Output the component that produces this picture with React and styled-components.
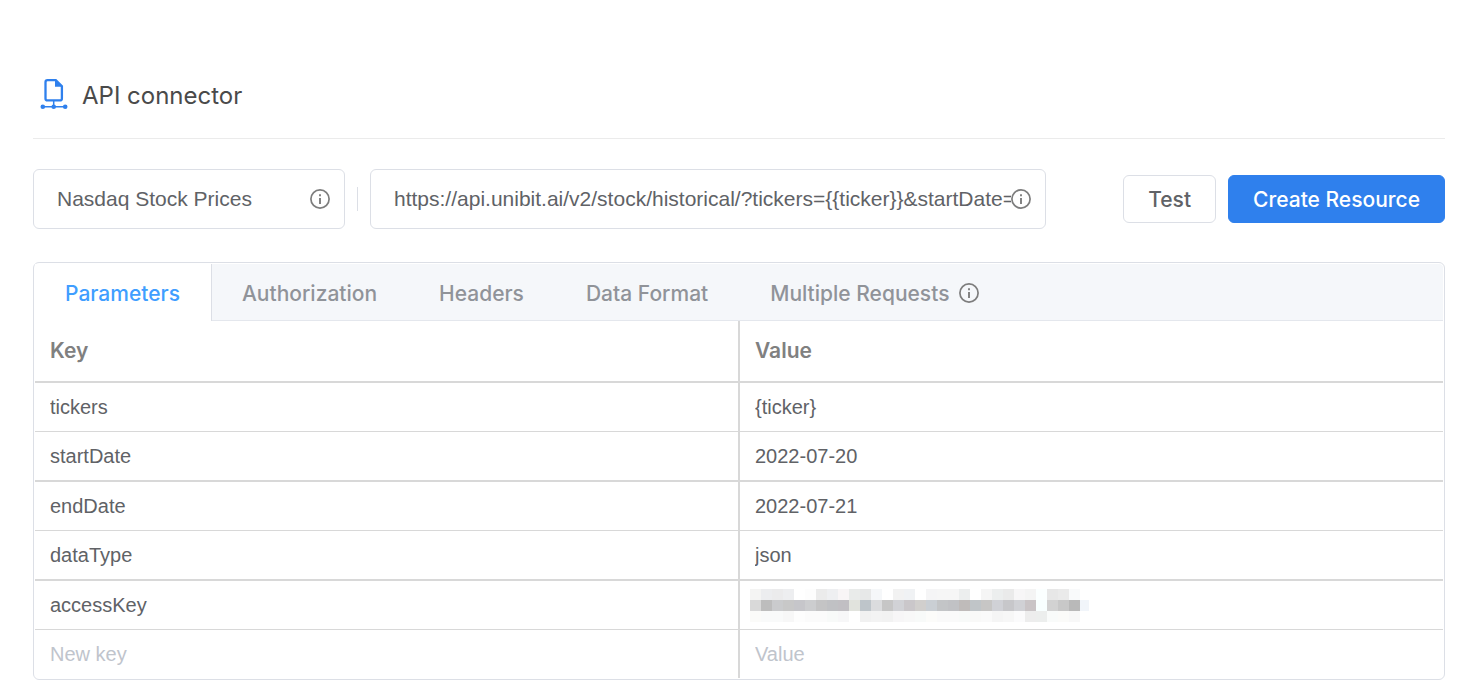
import React, { useState } from 'react';
import styled, { createGlobalStyle, css } from 'styled-components';

const GlobalStyle = createGlobalStyle`
* {
    box-sizing: border-box;
}

body {
    margin: 0;
    background-color: #ffffff;
    font-family: Inter, "Liberation Sans", sans-serif;
    color: #606266;
}
`

//Page
const Page = styled.main`
padding: 54px 34px 12px 33px;
`

//Header
const Header = styled.header`
display: flex;
align-items: center;
gap: 14px;
height: 85px;
padding-left: 7px;
border-bottom: 1px solid #ebebeb;

svg {
    margin-bottom: 4px;
}
`

const Title = styled.h1`
margin: 0;
font-size: 24px;
font-weight: 400;
line-height: 32px;
color: #4a4a4a;
`

//Toolbar
const Toolbar = styled.form`
display: flex;
align-items: center;
margin: 30px 0 33px;
`

const Field = styled.div`
display: flex;
align-items: center;
flex: ${props => props.$grow} 1 0;
max-width: ${props => props.$max};
height: 60px;
padding: 0 14px 0 23px;
border: 1px solid #dcdfe6;
border-radius: 6px;

svg {
    flex-shrink: 0;
}
`

const inputText = css`
min-width: 0;
padding: 0;
border: none;
outline: none;
background: transparent;
font-family: "Liberation Sans", Arial, sans-serif;
color: #606266;
`

const TextInput = styled.input`
${inputText}
flex: 1;
height: 32px;
font-size: 21px;
`

const Separator = styled.span`
width: 1px;
height: 24px;
margin: 0 12px;
background-color: #dcdfe6;
`

//Buttons
const Actions = styled.div`
display: flex;
gap: 12px;
margin-left: auto;
`

const Button = styled.button`
height: 48px;
padding: 0 24px;
border: 1px solid ${props => props.$primary ? '#2f80ed' : '#dcdfe6'};
border-radius: 6px;
background-color: ${props => props.$primary ? '#2f80ed' : '#ffffff'};
font-family: inherit;
font-size: 21px;
font-weight: 500;
color: ${props => props.$primary ? '#ffffff' : '#606266'};
white-space: nowrap;
cursor: pointer;
`

//Tabs
const Card = styled.section`
padding: 1px;
border: 1px solid #dcdfe6;
border-radius: 6px;
`

const TabList = styled.div`
display: flex;
height: 57px;
background-color: #f5f7fa;
border-radius: 4px 4px 0 0;
`

const Tab = styled.button`
display: flex;
align-items: center;
gap: 10px;
padding: 2px ${props => props.$active ? '31px' : '32px'} 0 30px;
border: solid #e4e7ed;
border-width: 0 ${props => props.$active ? '1px 0 0' : '0 1px 0'};
border-right-color: #dcdfe6;
background-color: ${props => props.$active ? '#ffffff' : 'transparent'};
font-family: inherit;
font-size: 21px;
font-weight: 500;
color: ${props => props.$active ? '#409eff' : '#909399'};
white-space: nowrap;
cursor: pointer;
`

const TabFill = styled.span`
flex: 1;
border-bottom: 1px solid #e4e7ed;
`

//Table
const Table = styled.table`
width: 100%;
table-layout: fixed;
border-collapse: separate;
border-spacing: 0;
`

// each side of the divider is half of its 2px
const divider = css`
&:first-child {
    border-right: 1px solid #d8d8d8;
}

&:last-child {
    border-left: 1px solid #d8d8d8;
}
`

const HeadCell = styled.th`
height: 62px;
padding: 0 15px 2px;
border-bottom: 2px solid #d8d8d8;
font-size: 21px;
font-weight: 600;
text-align: left;
color: #808080;
${divider}
`

const Row = styled.tr`
td {
    height: ${props => 48 + props.$line}px;
    border-bottom: ${props => props.$line}px solid #d8d8d8;
}
`

const Cell = styled.td`
padding: 0 15px;
${divider}
`

const CellInput = styled.input`
${inputText}
display: block;
width: 100%;
height: 32px;
font-size: 20px;

&::placeholder {
    color: #c0c4cc;
    opacity: 1;
}
`

const Masked = styled.svg`
display: block;
margin-left: -5px;
`

const InfoIcon = () => (
    <svg width="20" height="20" viewBox="0 0 20 20" fill="none" role="img" aria-label="Info">
        <circle cx="10" cy="10" r="9.1" stroke="#7d7d7d" strokeWidth="1.7" />
        <path d="M10 9v6" stroke="#7d7d7d" strokeWidth="1.9" />
        <path d="M10 5.2v2" stroke="#7d7d7d" strokeWidth="1.9" />
    </svg>
)

const ConnectorIcon = () => (
    <svg width="28" height="32" viewBox="0 0 28 32" fill="none" aria-hidden="true">
        <path d="M7.5 2.2h8.3L21.9 8.3V20.4a2 2 0 0 1-2 2H7.5a2 2 0 0 1-2-2V4.2a2 2 0 0 1 2-2z" stroke="#2f80ed" strokeWidth="2.3" />
        <path d="M15 1.5v7.3h7.8z" fill="#2f80ed" />
        <path d="M13.7 22.5v6M3 28.7h22" stroke="#2f80ed" strokeWidth="1.5" />
        <circle cx="2.8" cy="28.7" r="2.3" fill="#2f80ed" />
        <circle cx="13.7" cy="28.7" r="2.3" fill="#2f80ed" />
        <circle cx="25.2" cy="28.7" r="2.3" fill="#2f80ed" />
    </svg>
)

const tabs = ['Parameters', 'Authorization', 'Headers', 'Data Format', 'Multiple Requests'];

const params = [
    { key: 'tickers', value: '{ticker}', line: 1 },
    { key: 'startDate', value: '2022-07-20', line: 2 },
    { key: 'endDate', value: '2022-07-21', line: 1 },
    { key: 'dataType', value: 'json', line: 2 },
    { key: 'accessKey', masked: true, line: 1 },
];

// three rows of blocks that hide the secret
const blocks = [
    'f4f4f3 ecedef ebebec edeef0 ffffff fdfdfd ebebeb eeeff1 f8f5f6 e9ebea e7e8e8 f5f7f9 ffffff f2f2f2 f0f2f4 ffffff f5f5f6 f6f6f6 f6f6f6 eceeee ffffff f5f5f5 eceeee eaeaea f7f6f7 f4f4f4 fbffff e7e7e7 eaeaea f9fafb ffffff',
    'd9d9d9 bdbdbd cacbcd c8c8c8 c6c6ca cccdcf c4c4c5 c0c1c4 c1bfc3 e1e3dd bec5ca dbdcde c6c6c6 d1d2d6 cac7ca d1cfcd cacfd4 c3c5c7 c1c2c5 bfbbba c0c5c8 c7c6c5 d0d1d6 c7c7ca d0d1d5 c9c4c6 f8ffff d2d2d2 c8c8c8 b9b9b9 f1f5fa',
    'fbfbf9 f9fafa f9fafa f7f7f7 fdfdfd fbfbfb fbfbfb f8faf9 f7f7f8 ffffff f1f1f1 f3f3f3 f2f2f2 f7f6f7 f8f8f8 f8faf9 fcfcfa fafafa fafafa f8faf9 f9f9f8 fafafa f5f5f5 f7f7f7 fbfbfc ededed eceeed f9fbfa fbfbf9 f8f8f8 ffffff',
];

const MaskedValue = () => (
    <Masked width="340" height="33" shapeRendering="crispEdges" role="img" aria-label="Hidden access key">
        {blocks.map((row, y) => row.split(' ').map((color, x) => (
            <rect key={y + '-' + x} x={x * 11} y={y * 11} width={x === 30 ? 9 : 11} height="11" fill={'#' + color} />
        )))}
    </Masked>
)

export default function App() {
    const [active, setActive] = useState('Parameters');
    return(
        <>
            <GlobalStyle />
            <Page>
                <Header>
                    <ConnectorIcon />
                    <Title>API connector</Title>
                </Header>
                <Toolbar onSubmit={e => e.preventDefault()}>
                    <Field $grow={312} $max="312px">
                        <TextInput aria-label="Resource name" defaultValue="Nasdaq Stock Prices" />
                        <InfoIcon />
                    </Field>
                    <Separator />
                    <Field $grow={676} $max="676px">
                        <TextInput aria-label="Request URL" defaultValue="https://api.unibit.ai/v2/stock/historical/?tickers={{ticker}}&startDate=" />
                        <InfoIcon />
                    </Field>
                    <Actions>
                        <Button type="button">Test</Button>
                        <Button type="submit" $primary>Create Resource</Button>
                    </Actions>
                </Toolbar>
                <Card>
                    <TabList role="tablist">
                        {tabs.map(name => (
                            <Tab key={name} type="button" role="tab" aria-selected={active === name} $active={active === name} onClick={() => setActive(name)}>
                                {name}
                                {name === 'Multiple Requests' && <InfoIcon />}
                            </Tab>
                        ))}
                        <TabFill />
                    </TabList>
                    <Table>
                        <thead>
                            <tr>
                                <HeadCell>Key</HeadCell>
                                <HeadCell>Value</HeadCell>
                            </tr>
                        </thead>
                        <tbody>
                            {params.map(p => (
                                <Row key={p.key} $line={p.line}>
                                    <Cell><CellInput aria-label="Key" defaultValue={p.key} /></Cell>
                                    <Cell>{p.masked ? <MaskedValue /> : <CellInput aria-label="Value" defaultValue={p.value} />}</Cell>
                                </Row>
                            ))}
                            <Row $line={0}>
                                <Cell><CellInput aria-label="New key" placeholder="New key" /></Cell>
                                <Cell><CellInput aria-label="New value" placeholder="Value" /></Cell>
                            </Row>
                        </tbody>
                    </Table>
                </Card>
            </Page>
        </>
    );
}
